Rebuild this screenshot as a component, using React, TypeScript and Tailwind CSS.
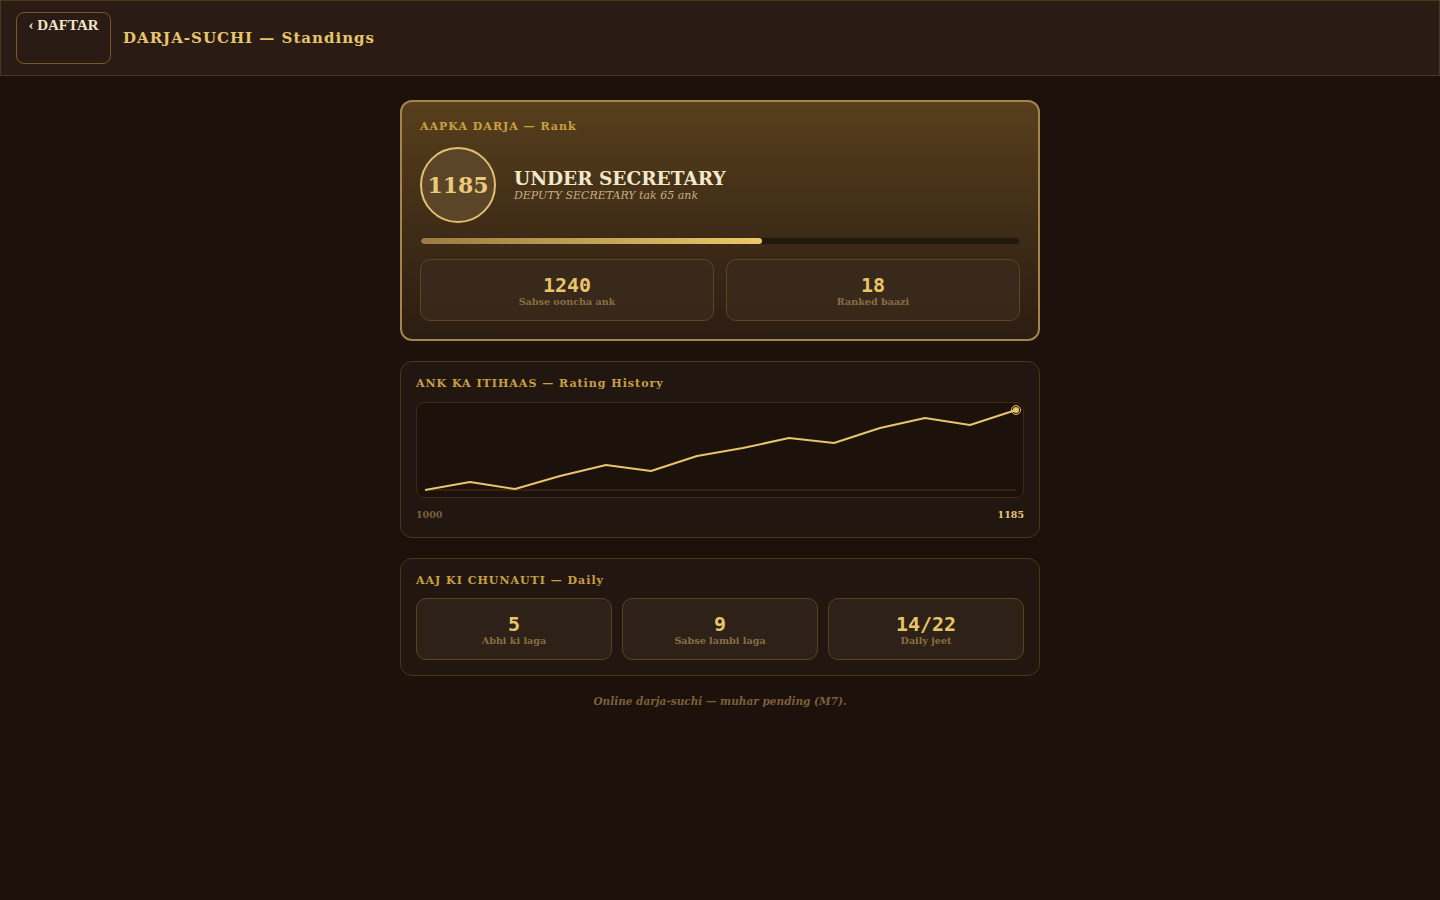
import React from "react";

const serif = { fontFamily: '"DejaVu Serif", serif' } as const;
const mono = { fontFamily: '"DejaVu Sans Mono", monospace' } as const;

const pts: [number, number][] = [
  [425, 490], [470, 482], [515, 489], [560, 476], [606, 465], [651, 471], [697, 456],
  [743, 448], [789, 438], [834, 443], [880, 428], [925, 418], [970, 425], [1016, 410],
];

function Stat({ value, label }: { value: string; label: string }) {
  return (
    <div className="flex h-[62px] flex-col items-center justify-center rounded-[10px] border border-[#5e4520] bg-[#3a2a1c]/80">
      <div style={mono} className="text-[20px] font-bold leading-[22px] text-[#e8c46a]">{value}</div>
      <div style={serif} className="text-[9.6px] font-bold leading-[11px] text-[#8a6e44]">{label}</div>
    </div>
  );
}

function Stat3({ value, label }: { value: string; label: string }) {
  return (
    <div className="flex h-[62px] flex-col items-center justify-center rounded-[10px] border border-[#5a4220] bg-[#2e2118]">
      <div style={mono} className="text-[20px] font-bold leading-[22px] text-[#e8c46a]">{value}</div>
      <div style={serif} className="text-[9.6px] font-bold leading-[11px] text-[#8a6e44]">{label}</div>
    </div>
  );
}

export default function App() {
  const ox = 417;
  const oy = 403;
  const line = pts.map(([x, y]) => `${x - ox},${y - oy}`).join(" ");
  return (
    <div style={serif} className="min-h-[900px] w-full bg-[#1c110b]">
      <header className="flex h-[76px] items-center gap-3 border border-[#4a3818] bg-[#2a1c15] px-[15px]">
        <button
          style={{ fontFamily: '"Liberation Serif", serif' }}
          className="flex h-[52px] w-[95px] items-start justify-center rounded-[8px] border border-[#7a5a24] pt-[1px] text-[15px] font-bold text-[#f0e4c8]"
        >
          ‹ DAFTAR
        </button>
        <h1 className="text-[15px] font-bold tracking-[1px] text-[#e8c46a]">DARJA-SUCHI — Standings</h1>
      </header>

      <main className="mx-auto flex w-[640px] flex-col gap-5 pt-6">
        <section className="rounded-[12px] border-2 border-[#a3844a] bg-gradient-to-b from-[#573f1c] to-[#2c1d12] px-[18px] pb-[18px] pt-[18px]">
          <div className="text-[11px] font-bold leading-[14px] tracking-[1px] text-[#c9a040]">AAPKA DARJA — Rank</div>
          <div className="mt-[13px] flex items-center gap-[18px]">
            <div className="flex h-[76px] w-[76px] items-center justify-center rounded-full border-2 border-[#e0c070] bg-[#5a4528]">
              <span className="text-[22px] font-bold text-[#ecca7a]">1185</span>
            </div>
            <div className="flex flex-col">
              <div className="text-[18.5px] font-bold leading-[21px] text-[#f4e8cc]">UNDER SECRETARY</div>
              <div className="text-[11px] italic leading-[13px] text-[#c8b080]">DEPUTY SECRETARY tak 65 ank</div>
            </div>
          </div>
          <div className="mt-[14px] h-[8px] w-full overflow-hidden rounded-full border border-[#3a2816] bg-[#24170e]">
            <div className="h-full w-[57%] rounded-full bg-gradient-to-r from-[#9a7c42] to-[#ecc96a]" />
          </div>
          <div className="mt-[14px] grid grid-cols-2 gap-3">
            <Stat value="1240" label="Sabse ooncha ank" />
            <Stat value="18" label="Ranked baazi" />
          </div>
        </section>

        <section className="rounded-[12px] border border-[#4a3618] bg-[#221710] px-[15px] pb-[15px] pt-[14px]">
          <div className="text-[11px] font-bold tracking-[1px] text-[#c9a040]">ANK KA ITIHAAS — Rating History</div>
          <div className="mt-[9px] h-[96px] rounded-[8px] border border-[#3a2a16] bg-[#1c120b]">
            <svg width="606" height="94" viewBox="0 0 606 94" className="block">
              <line x1={425 - ox} y1={490 - oy} x2={1016 - ox} y2={490 - oy} stroke="#33230f" strokeWidth="2" />
              <polyline points={line} fill="none" stroke="#e8c46a" strokeWidth="2" strokeLinejoin="round" />
              <circle cx={1016 - ox} cy={410 - oy} r="4.5" fill="none" stroke="#e8c46a" strokeWidth="1" />
              <circle cx={1016 - ox} cy={410 - oy} r="3" fill="#e8c46a" />
            </svg>
          </div>
          <div className="mt-[10px] flex justify-between text-[9.5px] font-bold">
            <span className="text-[#7a6040]">1000</span>
            <span className="text-[#e8c878]">1185</span>
          </div>
        </section>

        <section className="rounded-[12px] border border-[#4a3618] bg-[#221710] px-[15px] pb-[15px] pt-[14px]">
          <div className="text-[11px] font-bold tracking-[1px] text-[#c9a040]">AAJ KI CHUNAUTI — Daily</div>
          <div className="mt-[9px] grid grid-cols-3 gap-[10px]">
            <Stat3 value="5" label="Abhi ki laga" />
            <Stat3 value="9" label="Sabse lambi laga" />
            <Stat3 value="14/22" label="Daily jeet" />
          </div>
        </section>

        <p className="-mt-[2px] text-center text-[10.5px] font-bold italic text-[#7e6038]">
          Online darja-suchi — muhar pending (M7).
        </p>
      </main>
    </div>
  );
}
